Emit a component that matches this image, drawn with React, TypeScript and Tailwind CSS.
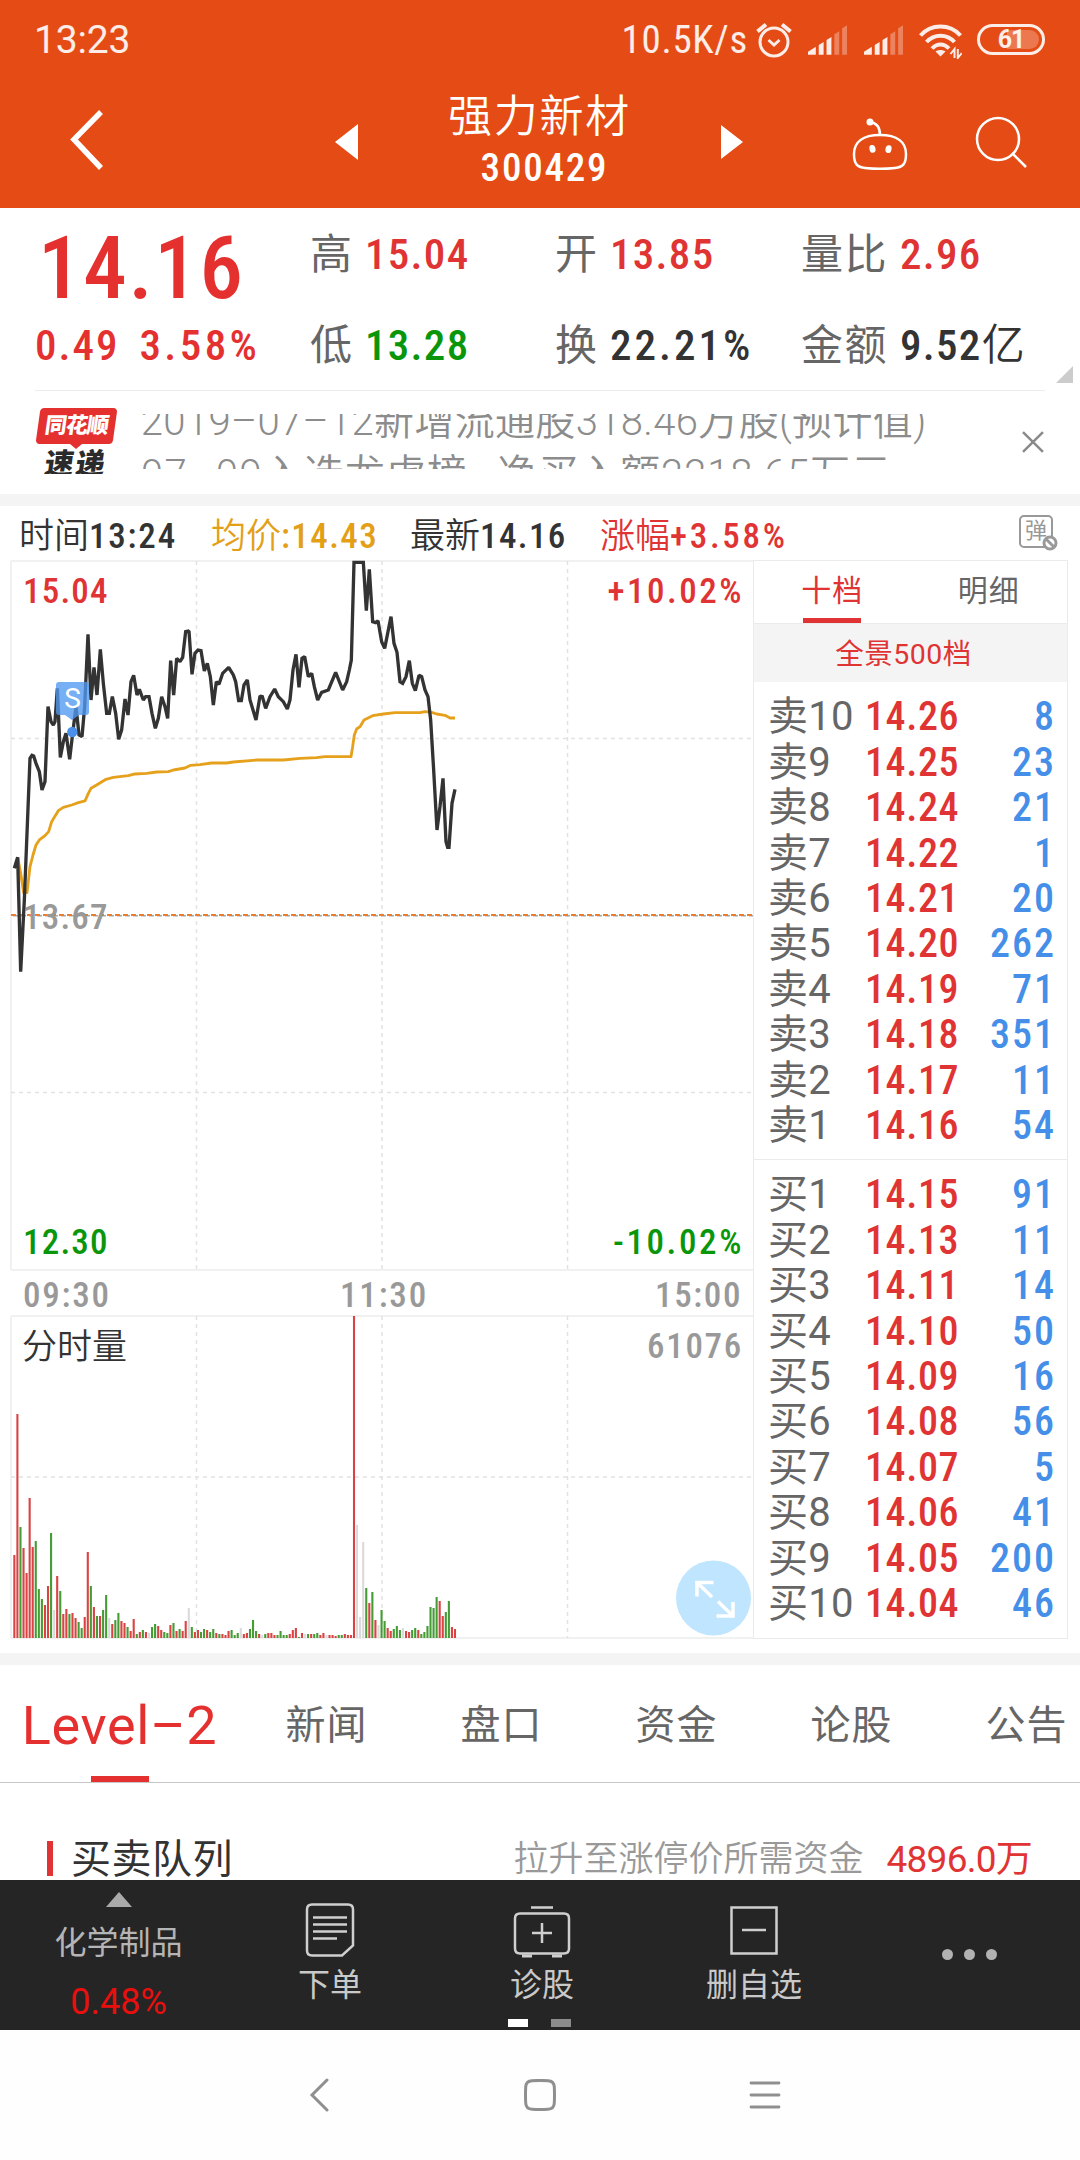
import type { ReactNode } from "react";

type Level = { label: string; price: string; qty: string };

const sells: Level[] = [
  { label: "卖10", price: "14.26", qty: "8" },
  { label: "卖9", price: "14.25", qty: "23" },
  { label: "卖8", price: "14.24", qty: "21" },
  { label: "卖7", price: "14.22", qty: "1" },
  { label: "卖6", price: "14.21", qty: "20" },
  { label: "卖5", price: "14.20", qty: "262" },
  { label: "卖4", price: "14.19", qty: "71" },
  { label: "卖3", price: "14.18", qty: "351" },
  { label: "卖2", price: "14.17", qty: "11" },
  { label: "卖1", price: "14.16", qty: "54" },
];

const buys: Level[] = [
  { label: "买1", price: "14.15", qty: "91" },
  { label: "买2", price: "14.13", qty: "11" },
  { label: "买3", price: "14.11", qty: "14" },
  { label: "买4", price: "14.10", qty: "50" },
  { label: "买5", price: "14.09", qty: "16" },
  { label: "买6", price: "14.08", qty: "56" },
  { label: "买7", price: "14.07", qty: "5" },
  { label: "买8", price: "14.06", qty: "41" },
  { label: "买9", price: "14.05", qty: "200" },
  { label: "买10", price: "14.04", qty: "46" },
];

// One entry per minute: direction (r up, g down, n flat) and bar height.
const volume =
  "r83 r224 g111 r90 r65 r140 r91 g97 g49 g39 r33 r52 g105 n28 r62 g47 r24 r29 g24 r25 r20 g16 g10 r21 r86 g52 r31 g22 r22 g28 g43 n20 r14 g18 g25 r17 r15 g11 r7 r19 g4 r6 g8 r6 n5 g11 g14 r12 r8 g6 g5 r13 g15 r7 g9 r7 r17 n30 g11 r6 r8 g6 g9 r8 g6 g9 r5 g4 r4 r3 r7 g8 g3 g5 n10 r4 r5 g9 g18 g7 r4 n3 g4 r5 r5 r3 g3 g7 g3 g3 r4 r8 r10 g1 r5 n4 g4 r4 g4 g5 r3 r5 n3 r3 r3 r2 g3 g3 r4 r3 r3 r322 n113 n21 n96 g50 r35 g46 r18 n13 g28 g17 r10 r7 g9 g12 g8 n10 r7 r6 g8 g10 r8 g4 g6 g12 g31 g30 g41 r37 r22 g26 g37 r11 r9".split(" ");

const barColor: Record<string, string> = { r: "#d94343", g: "#459c35", n: "#dadada" };

// Both series are stored in thirds of a pixel, y counted from 500.
const pricePoints =
  "43,1105 53,1072 62,1415 73,1200 90,775 96,766 101,768 108,790 118,815 126,870 135,845 144,620 153,665 160,675 165,665 172,565 181,772 190,725 198,700 209,778 218,700 228,620 237,705 246,710 254,620 264,403 273,600 282,502 291,585 301,448 310,550 320,640 328,640 337,590 347,640 356,718 365,690 375,597 384,645 393,545 401,526 411,585 418,568 430,600 437,590 447,590 456,640 466,685 475,655 485,590 495,620 503,655 512,482 521,585 530,475 540,485 548,472 557,395 567,393 576,523 585,460 594,450 603,452 613,513 622,490 631,530 640,615 649,545 657,553 668,520 686,502 700,525 707,545 716,602 724,602 732,555 742,540 750,600 768,660 780,588 787,590 797,625 810,590 824,567 835,590 850,605 862,627 870,600 879,510 888,463 897,562 906,475 914,470 925,530 935,520 943,560 953,600 965,577 985,570 1007,517 1028,570 1040,545 1048,510 1054,480 1062,187 1090,187 1099,332 1108,208 1118,365 1127,368 1134,362 1145,425 1154,445 1163,400 1173,350 1182,430 1191,457 1200,545 1208,550 1218,530 1228,482 1237,550 1246,572 1257,526 1265,530 1275,570 1284,590 1292,660 1301,810 1311,990 1320,920 1329,835 1338,1025 1343,1042 1347,1042 1356,910 1365,868";
const averagePoints =
  "53,1072 62,1120 71,1178 81,1178 90,1100 99,1065 108,1035 118,1020 135,1007 146,995 155,965 163,952 175,932 190,922 215,915 235,908 255,903 265,880 273,865 290,855 318,838 340,832 385,827 405,822 440,820 470,816 505,815 520,810 555,804 572,796 600,794 635,789 680,789 700,786 770,780 850,780 900,775 950,773 975,770 1053,770 1058,740 1063,705 1070,687 1080,680 1092,660 1118,647 1150,642 1185,638 1260,638 1275,635 1295,637 1310,642 1335,646 1350,654 1365,654";

function Signal() {
  return (
    <svg width="40" height="30" viewBox="0 0 41 30" fill="#fff" className="opacity-90">
      <path d="M0 30v-3l8-5v8z" />
      <path d="M11 30V20l5-3v13z" />
      <path d="M19 30V15l5-3v18z" />
      <path d="M27 30V9l5-3v24z" opacity=".35" />
      <path d="M35 30V3l5-3v30z" opacity=".35" />
    </svg>
  );
}

function StatusBar() {
  return (
    <div className="flex h-[78px] items-center pt-px pr-[35px] pl-[34px] text-[39px] leading-[78px] text-white/90">
      <span className="flex-1 tracking-[-0.200px]">13:23</span>
      <span className="mr-[8px] tracking-[0.700px] font-stretch-[75%]">10.5K/s</span>
      <svg width="36" height="36" viewBox="0 0 36 36" fill="none" stroke="#fff" strokeWidth="3" className="mr-[16px] opacity-90">
        <circle cx="18" cy="20" r="14" />
        <path d="M12.500 18l5.500 5 5.500-5" />
        <path d="M1.500 9.500l8.500-7M34.500 9.500l-8.500-7" strokeWidth="4" />
      </svg>
      <Signal />
      <span className="w-[16px]" />
      <Signal />
      <svg width="43" height="35" viewBox="0 0 43 35" fill="none" stroke="#fff" strokeWidth="4" className="mt-1 mr-[15px] ml-[15px] opacity-90">
        <path d="M1.500 11.500C12-.5 31-.5 41.500 11.500" />
        <path d="M7.500 18C15 9.500 28 9.500 35.500 18" />
        <path d="M13 24.500c5-5.500 12-5.500 17 0" />
        <path d="M16.500 27.500c3-2 7-2 10 0l-5 5z" fill="#fff" stroke="none" />
        <path d="M35.500 34v-9l-4 5M38.800 25v9l4-5" strokeWidth="2" />
      </svg>
      <span className="relative flex h-[31px] w-[68px] items-center justify-center rounded-full border-[3px] border-white/90">
        <span className="absolute top-[3px] right-[3px] h-[19px] w-[32px] rounded-r-full bg-white/25" />
        <span className="relative text-[25px] font-bold leading-none tracking-[-1px]">61</span>
      </span>
    </div>
  );
}

function Header() {
  return (
    <header className="h-[208px] bg-[#e54b15] text-white">
      <StatusBar />
      <div className="flex h-[130px] items-start">
        <svg width="36" height="60" viewBox="0 0 36 60" fill="none" stroke="#fff" strokeWidth="5.500" className="mt-[32px] ml-[69px]">
          <path d="M32 2L5 29.500 32 58" />
        </svg>
        <svg width="23" height="36" viewBox="0 0 23 36" fill="#fff" className="mt-[46px] ml-[230px]">
          <path d="M23 0v36L0 18z" />
        </svg>
        <div className="ml-[75px] flex w-[223px] flex-col items-center">
          <span className="mt-[12px] mr-[10px] text-[44px] font-[330] leading-[54px] tracking-[1.800px]">强力新材</span>
          <span className="mt-[4px] text-[39px] font-medium leading-[40px] tracking-[1.800px] font-stretch-[75%]">300429</span>
        </div>
        <svg width="22" height="34" viewBox="0 0 22 34" fill="#fff" className="mt-[47px] ml-[65px]">
          <path d="M0 0v34l22-17z" />
        </svg>
        <svg width="58" height="54" viewBox="0 0 58 54" fill="none" stroke="#fff" strokeWidth="2.500" className="mt-[39px] ml-[108px]">
          <path d="M29 18c17 0 26 7 26 19 0 10-3 13-11 14-9 1-21 1-30 0-8-1-11-4-11-14 0-12 9-19 26-19z" />
          <path d="M29 18c0-8-3-12-10-13" />
          <circle cx="19" cy="5" r="3.500" fill="#fff" stroke="none" />
          <ellipse cx="21.500" cy="32" rx="3" ry="4" fill="#fff" stroke="none" transform="rotate(-15 21 32)" />
          <ellipse cx="37.500" cy="32" rx="3" ry="4" fill="#fff" stroke="none" transform="rotate(15 37 32)" />
        </svg>
        <svg width="54" height="54" viewBox="0 0 54 54" fill="none" stroke="#fff" strokeWidth="2.500" className="mt-[38px] ml-[66px]">
          <circle cx="23" cy="23" r="21" />
          <path d="M37 37l14 14" />
        </svg>
      </div>
    </header>
  );
}

function Stat({ label, wide, children }: { label: string; wide?: boolean; children: ReactNode }) {
  return (
    <div className="flex h-[91px] items-center text-[42px] leading-[91px]">
      <span className={wide ? "w-[99px] tracking-[1.500px] text-[#666]" : "w-[55px] text-[#666]"}>{label}</span>
      <span className="text-[43px] font-medium tracking-[1.300px] font-stretch-[75%]">{children}</span>
    </div>
  );
}

function Quote() {
  return (
    <section className="relative grid h-[182px] grid-cols-[275px_245px_246px_278px] pl-[35px] whitespace-nowrap">
      <div className="text-[#e53030]">
        <div className="h-[106px] pt-[14px] pl-[3px] text-[87px] font-medium leading-[93px] tracking-[1.700px] font-stretch-[75%]">14.16</div>
        <div className="flex gap-[20px] text-[43px] font-medium leading-[62px] font-stretch-[75%]">
          <span className="tracking-[2px]">0.49</span>
          <span className="tracking-[3.400px]">3.58%</span>
        </div>
      </div>
      <div className="mt-px">
        <Stat label="高"><span className="text-[#e03434]">15.04</span></Stat>
        <Stat label="低"><span className="text-[#0a960a]">13.28</span></Stat>
      </div>
      <div className="mt-px">
        <Stat label="开"><span className="text-[#e03434]">13.85</span></Stat>
        <Stat label="换"><span className="tracking-[3px] text-[#333]">22.21%</span></Stat>
      </div>
      <div className="mt-px">
        <Stat label="量比" wide><span className="text-[#e03434]">2.96</span></Stat>
        <Stat label="金额" wide><span className="text-[#333]">9.52<span className="font-[350]">亿</span></span></Stat>
      </div>
      <svg width="17" height="17" viewBox="0 0 17 17" fill="#ccc" className="absolute right-[7px] bottom-[7px]">
        <path d="M17 0v17H0z" />
      </svg>
    </section>
  );
}

function News() {
  return (
    <section className="mx-[35px] flex h-[104px] border-t border-[#ececec]">
      <div className="mt-[17px] flex h-[66px] w-[83px] flex-col items-center overflow-hidden">
        <div className="flex h-[36px] w-[77px] shrink-0 -skew-x-[8deg] items-center justify-center rounded-[4px] bg-[#e53030] text-[22px] font-black leading-none tracking-[-1px] text-white">
          同花顺
        </div>
        <span className="h-0 w-0 border-x-[6px] border-t-[5px] border-x-transparent border-t-[#e53030]" />
        <span className="-mt-[4px] -skew-x-[8deg] text-[29px] font-black leading-[38px] tracking-[2px] text-[#2b2b2b]">速递</span>
      </div>
      <div className="mt-[23px] ml-[23px] h-[55px] w-[860px] overflow-hidden text-[40px] font-[350] text-[#8c8c8c]">
        <div className="-mt-[19px] leading-[53px] tracking-[0.350px] whitespace-nowrap">
          2019–07–12新增流通股318.46万股(预计值)
          <br />
          <span className="tracking-[1.500px]">07–09</span>
          <span className="tracking-[0.900px]">入选龙虎榜,&nbsp; 净买入额2218.65万元</span>
        </div>
      </div>
      <svg width="24" height="24" viewBox="0 0 24 24" stroke="#8a8a8a" strokeWidth="2.500" className="mt-[39px] ml-[22px]">
        <path d="M2 2l20 20M22 2L2 22" />
      </svg>
    </section>
  );
}

function ChartInfo() {
  return (
    <div className="flex h-[54px] items-center pt-[8px] pl-[19px] text-[35px] font-medium leading-[46px] whitespace-nowrap text-[#333]">
      <span className="w-[192px]"><span className="font-[350]">时间</span><span className="tracking-[1.800px] font-stretch-[75%]">13:24</span></span>
      <span className="w-[199px] text-[#e39f18]"><span className="font-[350]">均价</span><span className="tracking-[1.400px] font-stretch-[75%]">:14.43</span></span>
      <span className="w-[190px]"><span className="font-[350]">最新</span><span className="tracking-[1.400px] font-stretch-[75%]">14.16</span></span>
      <span className="text-[#e03434]"><span className="font-[350]">涨幅</span><span className="tracking-[2.700px] font-stretch-[75%]">+3.58%</span></span>
      <span className="relative mt-[-12px] mr-[27px] ml-auto flex h-[33px] w-[34px] items-center justify-center rounded-[5px] border-2 border-[#999] text-[22px] font-normal leading-none text-[#999]">
        弹
        <svg width="18" height="18" viewBox="0 0 18 18" fill="#fff" stroke="#999" strokeWidth="3" className="absolute -right-[8px] -bottom-[6px]">
          <circle cx="9" cy="9" r="6" />
          <path d="M5 5l8 8" />
        </svg>
      </span>
    </div>
  );
}

function Chart() {
  return (
    <svg width="743" height="1079" viewBox="10 560 743 1079" fill="none" className="shrink-0 text-[35px] font-medium tracking-[1.200px] font-stretch-[75%]">
      <g stroke="#f1f1f1" strokeWidth="2">
        <path d="M11 561h742M11 561v709M11 1270h742M11 1316h742M11 1316v322M11 1638h742" />
      </g>
      <g stroke="#e2e2e2" strokeWidth="1.500" strokeDasharray="4 4">
        <path d="M196.500 561v709M382 561v709M567.500 561v709M11 738.500h742M11 1092.500h742" />
        <path d="M196.500 1316v322M382 1316v322M567.500 1316v322M11 1477h742" />
      </g>
      <path d="M11 915.800h742" stroke="#a9a9a9" strokeWidth="1.500" strokeDasharray="5 3" strokeDashoffset="-2" />
      <path d="M11 915h742" stroke="#ea7f30" strokeWidth="1.800" strokeDasharray="5 3" />
      <text x="23" y="928.500" fill="#999">13.67</text>
      <g transform="translate(0 500) scale(.33333)" strokeLinejoin="round">
        <polyline points={averagePoints} stroke="#e6a11c" strokeWidth="8.500" />
        <polyline points={pricePoints} stroke="#333" strokeWidth="10" strokeLinejoin="miter" strokeMiterlimit="1.500" />
      </g>
      <path d="M59 682h27q3 0 3 3v27q0 3-3 3h-7l-7 5-7-5h-6q-3 0-3-3v-27q0-3 3-3z" fill="#4f98f0" opacity=".78" />
      <circle cx="72.300" cy="732" r="5.200" fill="#4a8fe8" />
      <text x="72.500" y="708" textAnchor="middle" fill="#fff" className="text-[28px] font-normal tracking-normal font-stretch-[100%]">S</text>
      <text x="23" y="603" fill="#e03434">15.04</text>
      <text x="744" y="603" textAnchor="end" fill="#e03434" className="tracking-[2.500px]">+10.02%</text>
      <text x="23" y="1254" fill="#0a960a">12.30</text>
      <text x="744" y="1254" textAnchor="end" fill="#0a960a" className="tracking-[2.600px]">-10.02%</text>
      <text x="23" y="1307" fill="#999" className="tracking-[1.800px]">09:30</text>
      <text x="384" y="1307" textAnchor="middle" fill="#999" className="tracking-[1.800px]">11:30</text>
      <text x="742" y="1307" textAnchor="end" fill="#999" className="tracking-[1.600px]">15:00</text>
      <text x="22" y="1359" fill="#333" className="font-[350] tracking-normal">分时量</text>
      <text x="743" y="1358" textAnchor="end" fill="#999" className="tracking-[1.700px]">61076</text>
      {volume.map((bar, i) => (
        <rect key={i} x={13.3 + i * 3.06} y={1638 - Number(bar.slice(1))} width="2.100" height={bar.slice(1)} fill={barColor[bar[0]]} />
      ))}
      <circle cx="713.500" cy="1598" r="37.500" fill="#bfe5ff" />
      <path d="M713.500 1582.500h-16.500v14M697 1582.500l15 14.500M716.500 1616h16.500v-14M733 1616l-15-14.500" stroke="#fff" strokeWidth="3.500" />
    </svg>
  );
}

function Rows({ rows }: { rows: Level[] }) {
  return (
    <>
      {rows.map((r) => (
        <div key={r.label} className="flex h-[45.450px] items-center pr-[11px] pl-[14px] text-[40px] font-medium leading-[45px]">
          <span className="w-[97px] font-normal tracking-[0.300px] whitespace-nowrap text-[#666]">{r.label}</span>
          <span className="tracking-[0.600px] text-[#e03434] font-stretch-[75%]">{r.price}</span>
          <span className="ml-auto tracking-[2px] text-[#458fe8] font-stretch-[75%]">{r.qty}</span>
        </div>
      ))}
    </>
  );
}

function OrderBook() {
  return (
    <aside className="flex h-[1079px] w-[315px] flex-col border border-[#ebebeb]">
      <div className="flex h-[63px] border-b border-[#ebebeb] text-[30px] tracking-[1px] text-[#666]">
        <div className="flex w-1/2 flex-col items-center justify-between text-[#e03434]">
          <span className="leading-[60px]">十档</span>
          <span className="-mt-[3px] h-[5px] w-[58px] bg-[#e03434]" />
        </div>
        <div className="w-1/2 text-center leading-[60px]">明细</div>
      </div>
      <div className="h-[58px] bg-[#f4f4f4] pr-[14px] text-center text-[28.500px] leading-[62px] tracking-[0.500px] text-[#e03434]">全景500档</div>
      <div className="h-[478px] border-b border-[#ebebeb] pt-[12px]">
        <Rows rows={sells} />
      </div>
      <div className="pt-[12px]">
        <Rows rows={buys} />
      </div>
    </aside>
  );
}

function Tabs() {
  return (
    <nav className="flex h-[118px] border-b border-[#c8c8c8] text-[40px] leading-[121px] whitespace-nowrap text-[#666]">
      <div className="flex w-[239px] shrink-0 flex-col items-center justify-between">
        <span className="h-[111px] text-[54px] leading-[122px] tracking-[0.700px] text-[#e53030]">Level–2</span>
        <span className="h-[6px] w-[58px] bg-[#e53030]" />
      </div>
      {["新闻", "盘口", "资金", "论股", "公告"].map((t) => (
        <span key={t} className="w-[175px] shrink-0 text-center tracking-[1px]">{t}</span>
      ))}
    </nav>
  );
}

function QueueTitle() {
  return (
    <section className="flex h-[97px] items-center overflow-hidden pt-[54px] pr-[48px] pl-[47px] whitespace-nowrap">
      <span className="h-[35px] w-[6px] bg-[#e03434]" />
      <span className="mt-[3px] ml-[18px] text-[40px] leading-[40px] tracking-[0.500px] text-[#333]">买卖队列</span>
      <span className="mt-[3px] ml-auto text-[35px] font-[350] leading-[40px] text-[#999]">拉升至涨停价所需资金</span>
      <span className="mt-[3px] ml-[23px] text-[37px] leading-[40px] tracking-[-0.750px] text-[#e03434]">4896.0万</span>
    </section>
  );
}

function ToolbarItem({ label, children }: { label: string; children: ReactNode }) {
  return (
    <div className="flex w-[212px] flex-col items-center pt-[20px]">
      <svg width="60" height="60" viewBox="0 0 60 60" fill="none" stroke="#cfcfcf" strokeWidth="2.500">
        {children}
      </svg>
      <span className="mt-[5px] text-[32px] leading-[40px] text-[#c9c9c9]">{label}</span>
    </div>
  );
}

function Toolbar() {
  return (
    <footer className="relative flex h-[150px] bg-[#252525]">
      <div className="flex w-[224px] flex-col items-center pt-[12px] pl-[13px]">
        <svg width="26" height="15" viewBox="0 0 26 15" fill="#aaa">
          <path d="M13 0l13 15H0z" />
        </svg>
        <span className="mt-[16px] text-[32px] leading-[40px] text-[#b5b5b5]">化学制品</span>
        <span className="mt-[19px] text-[36px] leading-[40px] text-[#e90f0f]">0.48%</span>
      </div>
      <ToolbarItem label="下单">
        <path d="M12 4.500h36q5 0 5 5v36l-11 10H12q-5 0-5-5v-41q0-5 5-5z" />
        <path d="M13 17.500h34M13 24.500h34M13 31.500h34M13 38.500h24" />
      </ToolbarItem>
      <ToolbarItem label="诊股">
        <path d="M8 13.500h44q5 0 5 5v30q0 5-5 5H8q-5 0-5-5v-30q0-5 5-5zM19 7.500h22M30 23v20M20 33h20" />
        <path d="M10 56h10M40 56h10" strokeWidth="3" />
      </ToolbarItem>
      <ToolbarItem label="删自选">
        <path d="M7.500 7.500h45v46h-45zM18 30h24" />
      </ToolbarItem>
      <div className="flex flex-1 items-center justify-center gap-[11px] pr-[2px] pb-[1px]">
        <span className="h-[11px] w-[11px] rounded-full bg-[#b2b2b2]" />
        <span className="h-[11px] w-[11px] rounded-full bg-[#b2b2b2]" />
        <span className="h-[11px] w-[11px] rounded-full bg-[#b2b2b2]" />
      </div>
      <div className="absolute bottom-[3px] left-[508px] flex gap-[23px]">
        <span className="h-[8px] w-[20px] bg-white" />
        <span className="h-[8px] w-[20px] bg-[#8c8c8c]" />
      </div>
    </footer>
  );
}

function SystemNav() {
  return (
    <div className="flex h-[130px] items-center bg-[#fefefe] pl-[309px]">
      <svg width="20" height="36" viewBox="0 0 20 36" fill="none" stroke="#8f8f8f" strokeWidth="3" strokeLinecap="round">
        <path d="M18 3L3 18l15 15" />
      </svg>
      <svg width="32" height="32" viewBox="0 0 32 32" fill="none" stroke="#8f8f8f" strokeWidth="3" className="ml-[195px]">
        <path d="M8 1.700Q16 1.200 24 1.700 30 2 30.300 8q.4 8 0 16-.3 6-6.300 6.300-8 .4-16 0-6-.3-6.300-6.300-.4-8 0-16Q2 2 8 1.700z" />
      </svg>
      <svg width="32" height="28" viewBox="0 0 32 28" fill="none" stroke="#8f8f8f" strokeWidth="2.800" strokeLinecap="round" className="ml-[193px]">
        <path d="M2 2h28M2 14h28M2 26h28" />
      </svg>
    </div>
  );
}

export default function App() {
  return (
    <div className="flex h-[2160px] w-[1080px] flex-col overflow-hidden bg-white font-['Roboto','Noto_Sans_CJK_SC',sans-serif]">
      <Header />
      <Quote />
      <News />
      <div className="h-[12px] bg-[#f4f4f4]" />
      <ChartInfo />
      <div className="flex pl-[10px]">
        <Chart />
        <OrderBook />
      </div>
      <div className="mt-[14px] h-[12px] bg-[#f4f4f4]" />
      <Tabs />
      <QueueTitle />
      <Toolbar />
      <SystemNav />
    </div>
  );
}
